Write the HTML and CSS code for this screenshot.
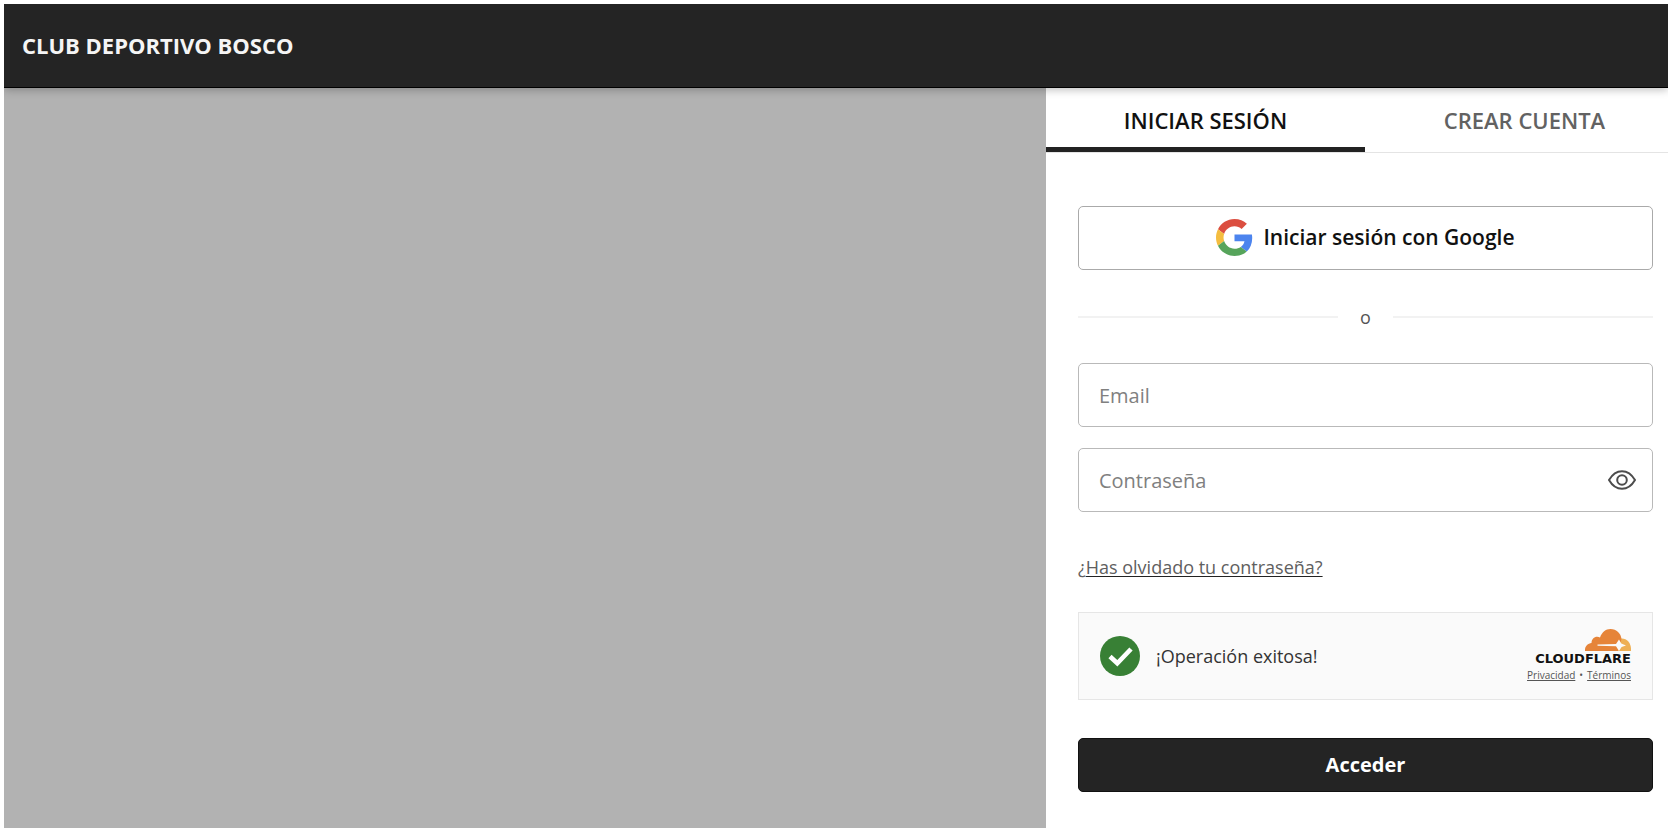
FILE: index.html
```html
<!DOCTYPE html>
<html lang="es">
<head>
<meta charset="utf-8">
<meta name="viewport" content="width=device-width, initial-scale=1">
<title>Club Deportivo Bosco</title>
<link rel="stylesheet" href="styles.css">
</head>
<body>
<div class="shell">
  <header class="topbar"><h1 class="brand">CLUB DEPORTIVO BOSCO</h1></header>
  <main class="content">
    <div class="cover"></div>
    <section class="panel">
      <div class="tabs" role="tablist">
        <button class="tab tab-active" type="button" role="tab" aria-selected="true">INICIAR SESIÓN</button>
        <button class="tab" type="button" role="tab" aria-selected="false">CREAR CUENTA</button>
      </div>
      <form class="form">
        <button class="google" type="button">
          <svg class="google-icon" viewBox="0 0 48 48" aria-hidden="true">
            <path fill="#db4e40" d="M24 9.5c3.54 0 6.71 1.22 9.21 3.6l6.85-6.85C35.9 2.38 30.47 0 24 0 14.62 0 6.51 5.38 2.56 13.22l7.98 6.19C12.43 13.72 17.74 9.5 24 9.5z"/>
            <path fill="#4c84ee" d="M46.98 24.55c0-1.57-.15-3.09-.38-4.55H24v9.02h12.94c-.58 2.96-2.26 5.48-4.78 7.18l7.73 6c4.51-4.18 7.09-10.36 7.09-17.65z"/>
            <path fill="#f4bd40" d="M10.53 28.59c-.48-1.45-.76-2.99-.76-4.59s.27-3.14.76-4.59l-7.98-6.19C.92 16.46 0 20.12 0 24s.92 7.54 2.56 10.78l7.97-6.19z"/>
            <path fill="#56a45b" d="M24 48c6.48 0 11.93-2.13 15.89-5.81l-7.73-6c-2.15 1.45-4.92 2.3-8.16 2.3-6.26 0-11.57-4.22-13.47-9.91l-7.98 6.19C6.51 42.62 14.62 48 24 48z"/>
          </svg>
          Iniciar sesión con Google
        </button>
        <div class="divider">o</div>
        <div class="fields">
          <input class="field" type="email" placeholder="Email" aria-label="Email">
          <div class="password">
            <input class="field" type="password" placeholder="Contraseña" aria-label="Contraseña">
            <button class="reveal" type="button" aria-label="Mostrar contraseña">
              <svg viewBox="0 0 28 20" width="28" height="20" fill="none" stroke="#4c4c4c" stroke-width="2" aria-hidden="true">
                <path d="M1 10C4.500 4 9 1.200 14 1.200S23.500 4 27 10C23.500 16 19 18.800 14 18.800S4.500 16 1 10z"/>
                <circle cx="14" cy="10" r="4.800"/>
              </svg>
            </button>
          </div>
        </div>
        <p class="forgot">¿<a class="forgot-link" href="#recuperar">Has olvidado tu contraseña?</a></p>
        <div class="check">
          <svg class="check-icon" viewBox="0 0 40 40" aria-hidden="true">
            <circle cx="20" cy="20" r="20" fill="#388035"/>
            <path d="M10 20.500L17.300 27.300L31 13" fill="none" stroke="#fff" stroke-width="4.600"/>
          </svg>
          <span class="check-text">¡Operación exitosa!</span>
          <div class="cf">
            <svg class="cf-cloud" viewBox="0 0 46 22" aria-hidden="true">
              <path fill="#eeb056" d="M32 22V13L35 9.700C41 8.500 46 13.500 46 20V22z"/>
              <path fill="#e68439" d="M0 22C-.4 17.500 2.500 14.500 6.500 14C6.500 9.500 10.500 6.500 15 8.400C17 3.200 20.500 0 25.500 0C31.500 0 36 4.500 36.500 10L33 22z"/>
              <path fill="#fafafa" d="M12.500 15.400L31 14.900L34 10.500L36.300 14.600L41 16.500L36.600 18L34 22L31 17.200L12.500 16.700z"/>
            </svg>
            <span class="cf-name">CLOUDFLARE</span>
            <div class="cf-links"><a href="#privacidad">Privacidad</a><span>•</span><a href="#terminos">Términos</a></div>
          </div>
        </div>
        <button class="submit" type="submit">Acceder</button>
      </form>
    </section>
  </main>
</div>
</body>
</html>
```
FILE: styles.css
```css
* { box-sizing: border-box; }
body {
  margin: 0;
  background: #fff;
  color: #111;
  font-family: "Open Sans", "Noto Sans", sans-serif;
}
button, input { font: inherit; color: inherit; }
button { cursor: pointer; }
.shell {
  display: flex;
  flex-direction: column;
  min-height: 100vh;
  padding: 4px 8px 10px 4px;
}
.topbar {
  position: relative;
  z-index: 1;
  display: flex;
  align-items: center;
  min-height: 84px;
  padding: 0 18px 2px;
  background: #242424;
  border-bottom: 1px solid #000;
  box-shadow: 0 2px 8px rgba(0, 0, 0, .25);
  clip-path: inset(0 0 -12px 0);
}
.brand {
  margin: 0;
  color: #f5f5f5;
  font-size: 22px;
  line-height: 28px;
  font-weight: 700;
}
.content { display: flex; flex: 1; }
.cover { flex: 67; background: #b2b2b2; }
.panel { flex: 40; min-width: 0; overflow: hidden; }
.tabs {
  display: grid;
  grid-template-columns: 1fr 1fr;
  width: calc(100% + 16px);
  border-bottom: 1px solid #e4e4e4;
}
.tab {
  height: 64px;
  padding: 4px 0 0;
  border: 0;
  border-bottom: 5px solid transparent;
  background: none;
  color: #626262;
  font-size: 22px;
  font-weight: 600;
}
.tab-active { color: #111; border-bottom-color: #222; }
.form {
  display: flex;
  flex-direction: column;
  padding: 53px 15px 36px 32px;
}
.google {
  display: flex;
  align-items: center;
  justify-content: center;
  gap: 10px;
  height: 64px;
  padding: 0 0 2px;
  border: 1px solid #aaa;
  border-radius: 5px;
  background: #fff;
  font-size: 21px;
  font-weight: 600;
}
.google-icon { width: 37px; height: 37px; }
.divider {
  display: flex;
  align-items: center;
  gap: 22px;
  margin: 33px 0 32px;
  color: #555;
  font-size: 18px;
  line-height: 28px;
}
.divider::before, .divider::after {
  content: "";
  flex: 1;
  height: 2px;
  background: #f2f2f2;
}
.fields { display: grid; gap: 21px; }
.field {
  display: block;
  width: 100%;
  height: 64px;
  padding: 0 20px;
  border: 1px solid #b9b9b9;
  border-radius: 5px;
  background: #fff;
  font-size: 20px;
}
.field::placeholder { color: #808080; opacity: 1; }
.password { position: relative; }
.reveal {
  position: absolute;
  top: 0;
  right: 12px;
  bottom: 0;
  display: flex;
  align-items: center;
  padding: 0 5px;
  border: 0;
  background: none;
}
.forgot {
  margin: 42px 0 32px;
  color: #606060;
  font-size: 18px;
  line-height: 26px;
}
.forgot-link { color: inherit; text-decoration-color: #222; text-underline-offset: 2px; }
.check {
  display: flex;
  align-items: center;
  height: 88px;
  padding: 0 21px;
  border: 1px solid #e6e6e6;
  background: #fafafa;
}
.check-icon { width: 40px; height: 40px; }
.check-text {
  margin-left: 16px;
  color: #333;
  font-size: 18px;
}
.cf {
  display: flex;
  flex-direction: column;
  align-items: flex-end;
  margin-left: auto;
}
.cf-cloud { width: 46px; height: 22px; }
.cf-name {
  color: #111;
  font: 700 13px/16px "DejaVu Sans", sans-serif;
}
.cf-links {
  display: flex;
  gap: 4px;
  color: #555;
  font-size: 10px;
  line-height: 16px;
}
.cf-links a { color: inherit; }
.submit {
  height: 54px;
  margin-top: 38px;
  padding: 0 0 2px;
  border: 1px solid #111;
  border-radius: 5px;
  background: #242424;
  color: #fff;
  font-size: 20px;
  font-weight: 700;
}
```
